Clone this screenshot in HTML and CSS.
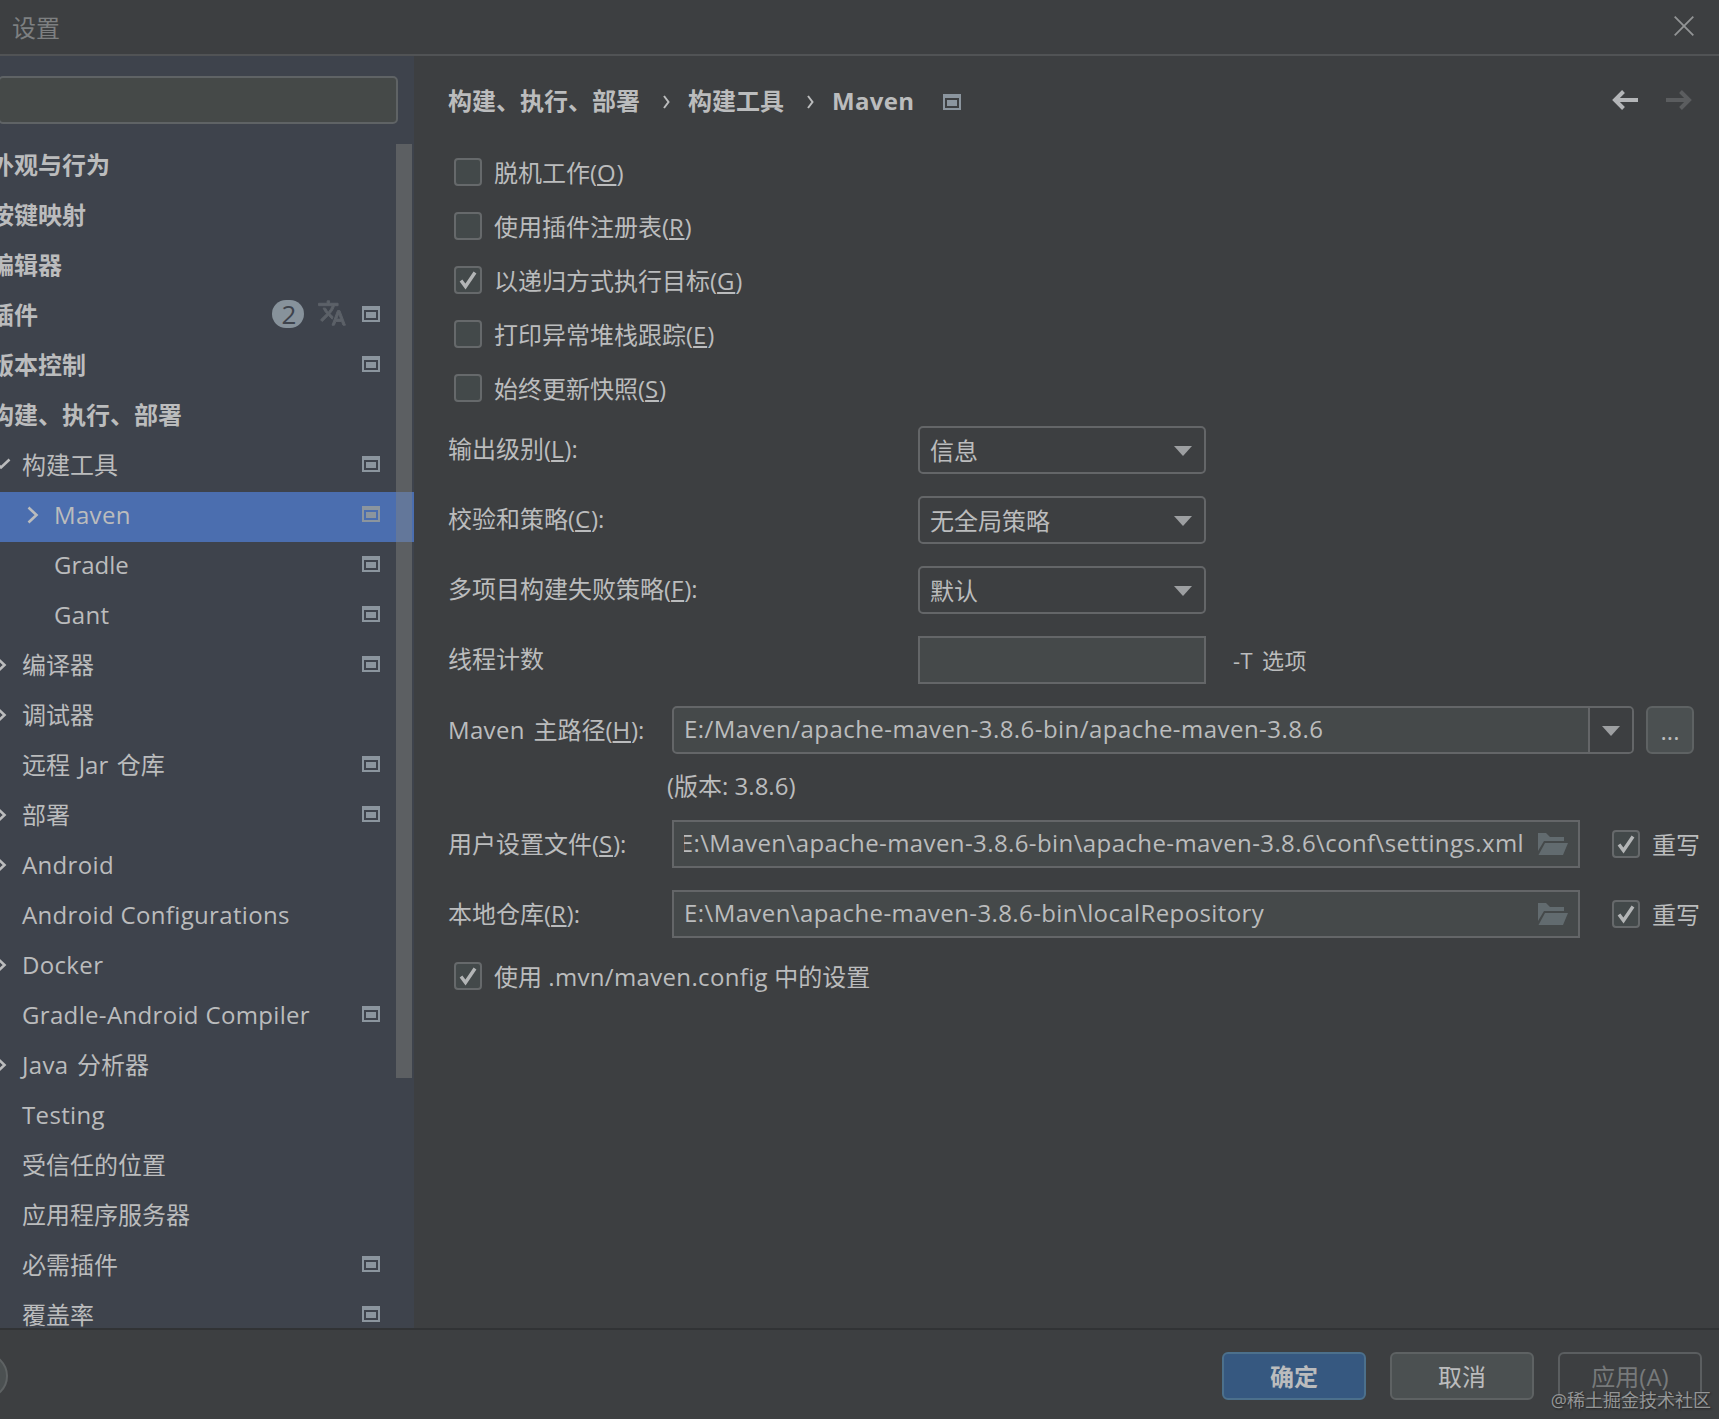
FILE: index.html
```
<!DOCTYPE html>
<html lang="zh-CN">
<head>
<meta charset="utf-8">
<title>设置</title>
<link rel="stylesheet" href="styles.css">
</head>
<body>
<svg width="0" height="0" class="defs">
  <symbol id="project" viewBox="0 0 18 16"><path fill-rule="evenodd" d="M0 0H18V16H0ZM2 4V14H16V4ZM4 6H14V12H4Z"/></symbol>
  <symbol id="right" viewBox="0 0 12 18"><path d="M1.5 1.5 9.5 9 1.5 16.5" fill="none" stroke="currentColor" stroke-width="2.6"/></symbol>
  <symbol id="down" viewBox="0 0 20 12"><path d="M1.5 1.5 10 9.5 18.5 1.5" fill="none" stroke="currentColor" stroke-width="2.6"/></symbol>
  <symbol id="arrow" viewBox="0 0 18 10"><path d="M0 0H18L9 10Z"/></symbol>
  <symbol id="tick" viewBox="0 0 28 28"><path d="M7 14.5 11.5 20.5 21 6.5" fill="none" stroke="currentColor" stroke-width="3.4"/></symbol>
  <symbol id="folder" viewBox="0 0 30 22"><path d="M0 0H8L12 4H26V8H6L0 18Z"/><path d="M7 10H30L25 22H0.5Z"/></symbol>
  <symbol id="back" viewBox="0 0 26 20"><path d="M26 10H3M11.5 1.5 3 10 11.5 18.5" fill="none" stroke="currentColor" stroke-width="4"/></symbol>
  <symbol id="translate" viewBox="0.5 1.5 23 21"><path stroke="currentColor" stroke-width=".8" d="M12.87 15.07l-2.54-2.51.03-.03c1.74-1.94 2.98-4.17 3.71-6.53H17V4h-7V2H8v2H1v1.99h11.17C11.5 7.92 10.44 9.75 9 11.35 8.07 10.32 7.3 9.19 6.69 8h-2c.73 1.63 1.73 3.17 2.98 4.56l-5.09 5.02L4 19l5-5 3.11 3.11.76-2.04zM18.5 10h-2L12 22h2l1.12-3h4.75L21 22h2l-4.5-12zm-2.62 7l1.62-4.33L19.12 17h-3.24z"/></symbol>
</svg>
<div class="window">
  <header class="titlebar">
    <span>设置</span>
    <svg class="close" width="20" height="20" viewBox="0 0 20 20"><path d="M.7.7 19.3 19.3M19.3.7.7 19.3" fill="none" stroke="currentColor" stroke-width="1.8"/></svg>
  </header>
  <div class="content">
    <aside class="sidebar">
      <div class="search"></div>
      <div class="tree">
        <div class="node top"><span>外观与行为</span></div>
        <div class="node top"><span>按键映射</span></div>
        <div class="node top"><span>编辑器</span></div>
        <div class="node top"><span>插件</span><b class="count">2</b><svg class="lang"><use href="#translate"/></svg><svg class="proj"><use href="#project"/></svg></div>
        <div class="node top"><span>版本控制</span><svg class="proj"><use href="#project"/></svg></div>
        <div class="node top"><span>构建、执行、部署</span></div>
        <div class="node"><i class="toggle"><svg class="chev-down"><use href="#down"/></svg></i><span>构建工具</span><svg class="proj"><use href="#project"/></svg></div>
        <div class="node child selected"><i class="toggle"><svg class="chev"><use href="#right"/></svg></i><span class="latin">Maven</span><svg class="proj"><use href="#project"/></svg></div>
        <div class="node child"><i class="toggle"></i><span>Gradle</span><svg class="proj"><use href="#project"/></svg></div>
        <div class="node child"><i class="toggle"></i><span class="latin">Gant</span><svg class="proj"><use href="#project"/></svg></div>
        <div class="node"><i class="toggle"><svg class="chev"><use href="#right"/></svg></i><span>编译器</span><svg class="proj"><use href="#project"/></svg></div>
        <div class="node"><i class="toggle"><svg class="chev"><use href="#right"/></svg></i><span>调试器</span></div>
        <div class="node"><i class="toggle"></i><span class="mixed">远程 Jar 仓库</span><svg class="proj"><use href="#project"/></svg></div>
        <div class="node"><i class="toggle"><svg class="chev"><use href="#right"/></svg></i><span>部署</span><svg class="proj"><use href="#project"/></svg></div>
        <div class="node"><i class="toggle"><svg class="chev"><use href="#right"/></svg></i><span class="latin">Android</span></div>
        <div class="node"><i class="toggle"></i><span class="latin">Android Configurations</span></div>
        <div class="node"><i class="toggle"><svg class="chev"><use href="#right"/></svg></i><span class="latin">Docker</span></div>
        <div class="node"><i class="toggle"></i><span class="latin">Gradle-Android Compiler</span><svg class="proj"><use href="#project"/></svg></div>
        <div class="node"><i class="toggle"><svg class="chev"><use href="#right"/></svg></i><span class="mixed"><span class="latin">Java</span> 分析器</span></div>
        <div class="node"><i class="toggle"></i><span class="latin">Testing</span></div>
        <div class="node"><i class="toggle"></i><span>受信任的位置</span></div>
        <div class="node"><i class="toggle"></i><span>应用程序服务器</span></div>
        <div class="node"><i class="toggle"></i><span>必需插件</span><svg class="proj"><use href="#project"/></svg></div>
        <div class="node"><i class="toggle"></i><span>覆盖率</span><svg class="proj"><use href="#project"/></svg></div>
        <div class="scrollbar"></div>
      </div>
    </aside>
    <main class="panel">
      <div class="crumbs">
        <span>构建、执行、部署</span><svg class="sep" viewBox="0 0 7 14"><path d="M1 1 5.5 7 1 13" fill="none" stroke="currentColor" stroke-width="2"/></svg><span>构建工具</span><svg class="sep" viewBox="0 0 7 14"><path d="M1 1 5.5 7 1 13" fill="none" stroke="currentColor" stroke-width="2"/></svg><span class="latin">Maven</span><svg class="proj"><use href="#project"/></svg>
        <div class="history"><svg><use href="#back"/></svg><svg class="forward"><use href="#back"/></svg></div>
      </div>
      <div class="checks">
        <label class="check"><i class="box"></i><span>脱机工作(<u>O</u>)</span></label>
        <label class="check"><i class="box"></i><span>使用插件注册表(<u>R</u>)</span></label>
        <label class="check"><i class="box"><svg><use href="#tick"/></svg></i><span>以递归方式执行目标(<u>G</u>)</span></label>
        <label class="check"><i class="box"></i><span>打印异常堆栈跟踪(<u>E</u>)</span></label>
        <label class="check"><i class="box"></i><span>始终更新快照(<u>S</u>)</span></label>
      </div>
      <div class="options">
        <span class="label">输出级别(<u>L</u>):</span><div class="select"><span>信息</span><svg class="arrow"><use href="#arrow"/></svg></div><span></span>
        <span class="label">校验和策略(<u>C</u>):</span><div class="select"><span>无全局策略</span><svg class="arrow"><use href="#arrow"/></svg></div><span></span>
        <span class="label">多项目构建失败策略(<u>F</u>):</span><div class="select"><span>默认</span><svg class="arrow"><use href="#arrow"/></svg></div><span></span>
        <span class="label">线程计数</span><div class="input"></div><span class="hint">-T 选项</span>
      </div>
      <div class="row home">
        <span class="name mixed"><span class="latin">Maven</span> 主路径(<u>H</u>):</span>
        <div class="combo"><span class="path wide">E:/Maven/apache-maven-3.8.6-bin/apache-maven-3.8.6</span><div class="drop"><svg class="arrow"><use href="#arrow"/></svg></div></div>
        <div class="browse">...</div>
      </div>
      <div class="version">(版本: 3.8.6)</div>
      <div class="row">
        <span class="name">用户设置文件(<u>S</u>):</span>
        <div class="input file"><span class="path scrolled"><span>E:\Maven\apache-maven-3.8.6-bin\apache-maven-3.8.6\conf\settings.xml</span></span><svg class="folder"><use href="#folder"/></svg></div>
        <label class="check override"><i class="box"><svg><use href="#tick"/></svg></i><span>重写</span></label>
      </div>
      <div class="row">
        <span class="name">本地仓库(<u>R</u>):</span>
        <div class="input file"><span class="path">E:\Maven\apache-maven-3.8.6-bin\localRepository</span><svg class="folder"><use href="#folder"/></svg></div>
        <label class="check override"><i class="box"><svg><use href="#tick"/></svg></i><span>重写</span></label>
      </div>
      <label class="check config"><i class="box"><svg><use href="#tick"/></svg></i><span>使用 <span class="latin">.mvn/maven.config</span> 中的设置</span></label>
    </main>
  </div>
  <footer class="footer">
    <div class="help"></div>
    <div class="button primary">确定</div>
    <div class="button">取消</div>
    <div class="button disabled">应用(A)</div>
    <div class="watermark">@稀土掘金技术社区</div>
  </footer>
</div>
</body>
</html>
```
FILE: styles.css
```
* { box-sizing: border-box; }
body { margin: 0; background: #3d3f41; }
svg { display: block; fill: currentColor; flex: none; }
.defs { position: absolute; }
i { font-style: normal; }
u { text-decoration: underline; text-decoration-thickness: 2px; text-underline-offset: 2px; text-decoration-skip-ink: none; letter-spacing: .7px; }

.window {
  width: 1719px; height: 1419px; overflow: hidden;
  display: flex; flex-direction: column;
  font: 24px/32px "Open Sans", "Noto Sans CJK SC", sans-serif;
  color: #bbbcbd; white-space: nowrap;
}
.latin { letter-spacing: .34px; }
.mixed { word-spacing: 2.4px; }
.titlebar {
  height: 56px; border-bottom: 2px solid #515355; color: #7e8081;
  display: flex; justify-content: space-between; align-items: center;
  padding: 0 25px 0 12px;
}
.titlebar span { padding-top: 2px; }
.close { color: #929495; margin-bottom: 2px; }
.content { display: flex; height: 1272px; }

.sidebar { width: 414px; background: #3e434c; padding-top: 20px; display: flex; flex-direction: column; }
.search { width: 400px; height: 48px; margin-left: -2px; border: 2px solid #5f6365; border-radius: 5px; background: #454948; flex: none; }
.tree { position: relative; margin-top: 18px; flex: 1; overflow: hidden; }
.node { height: 50px; display: flex; align-items: center; padding: 0 34px 4px 0; }
.node > span { margin-right: auto; }
.top { font-weight: 700; }
.top > span { margin-left: -10px; }
.toggle { width: 22px; height: 46px; flex: none; display: flex; align-items: center; }
.child { padding-left: 32px; }
.selected { background: #4b6eaf; }
.chev { width: 12px; height: 18px; margin-left: -5px; }
.chev-down { width: 20px; height: 12px; margin-left: -9px; margin-top: -2px; }
.proj { width: 18px; height: 16px; color: #8b959e; }
.node .proj { margin-top: -2px; }
.count { width: 32px; height: 28px; border-radius: 14px; background: #87929b; color: #3e434c; font-size: 26px; font-weight: 400; line-height: 29px; text-align: center; padding-left: 2px; margin: -2px 14px 0 0; }
.lang { width: 28px; height: 26px; margin: -4px 16px 0 0; color: #5c6168; }
.scrollbar { position: absolute; left: 396px; top: 2px; width: 16px; height: 934px; background: rgba(133, 133, 128, .43); }

.panel { flex: 1; padding: 26px 17px 0 34px; }
.crumbs { display: flex; align-items: center; height: 40px; font-weight: 700; }
.crumbs > span { padding-bottom: 2px; }
.sep { width: 7px; height: 14px; margin: 0 18px 0 23px; }
.crumbs .proj { margin-left: 29px; }
.history { display: flex; gap: 28px; margin-left: auto; padding-right: 10px; }
.history svg { width: 26px; height: 20px; margin-top: -4px; color: #b4b6b8; }
.history .forward { transform: scaleX(-1); color: #5b5d5f; }

.checks { margin: 36px 0 0 6px; display: grid; gap: 26px; }
.check { display: flex; align-items: center; height: 28px; gap: 12px; }
.check > span { padding-top: 2px; }
.box { width: 28px; height: 28px; border: 2px solid #66696b; border-radius: 4px; background: #43494a; flex: none; }
.box svg { width: 28px; height: 28px; margin: -2px; color: #b3b5b6; }

.options { margin-top: 24px; display: grid; grid-template-columns: 470px 288px auto; grid-auto-rows: 48px; row-gap: 22px; align-items: center; }
.label { padding-bottom: 2px; }
.select, .input { height: 48px; border: 2px solid #646668; display: flex; align-items: center; }
.select { border-radius: 5px; padding: 0 12px 0 10px; justify-content: space-between; }
.select > span { padding-top: 2px; }
.arrow { width: 18px; height: 10px; color: #9d9fa1; margin-top: 2px; }
.input { background: #45494a; }
.hint { font-size: 22px; padding: 0 0 1px 27px; letter-spacing: .4px; word-spacing: 3px; }

.row { display: flex; align-items: center; height: 48px; margin-bottom: 22px; }
.name { width: 224px; flex: none; }
.home { margin: 22px 0 0; }
.combo { width: 962px; height: 48px; border: 2px solid #646668; border-radius: 5px; background: #45494a; display: flex; align-items: center; justify-content: space-between; padding-left: 10px; }
.drop { width: 44px; height: 44px; border-left: 2px solid #646668; background: #3d3f41; border-radius: 0 3px 3px 0; display: flex; align-items: center; justify-content: center; }
.browse { width: 48px; height: 48px; margin-left: 12px; border: 2px solid #5e6263; border-radius: 6px; background: #4b5051; text-align: center; line-height: 46px; }
.version { margin: 16px 0 18px; height: 32px; padding-left: 219px; }
.file { width: 908px; padding: 0 10px; justify-content: space-between; }
.path { padding-bottom: 3px; letter-spacing: .4px; }
.wide { letter-spacing: .46px; }
.scrolled { width: 840px; margin-right: auto; overflow: hidden; display: flex; justify-content: flex-end; }
.folder { width: 30px; height: 22px; color: #626b6f; }
.override { margin-left: 32px; }
.config { margin: 24px 0 0 6px; }

.footer { position: relative; height: 91px; border-top: 2px solid #313335; display: flex; padding: 22px 17px 0 0; gap: 24px; }
.help { width: 46px; height: 46px; margin: 1px auto 0 -38px; border: 2px solid #5e6263; border-radius: 50%; background: #4b5051; }
.button { width: 144px; height: 48px; border: 2px solid #5e6263; border-radius: 6px; background: #4b5051; text-align: center; line-height: 45px; }
.primary { background: #365880; border-color: #4c708c; font-weight: 700; }
.disabled { background: none; color: #777a7b; border-color: #5b5e60; }
.watermark { position: absolute; right: 8px; bottom: 7px; font-size: 18px; line-height: 24px; color: #949697; text-shadow: 1px 1px 2px #222; }
```
